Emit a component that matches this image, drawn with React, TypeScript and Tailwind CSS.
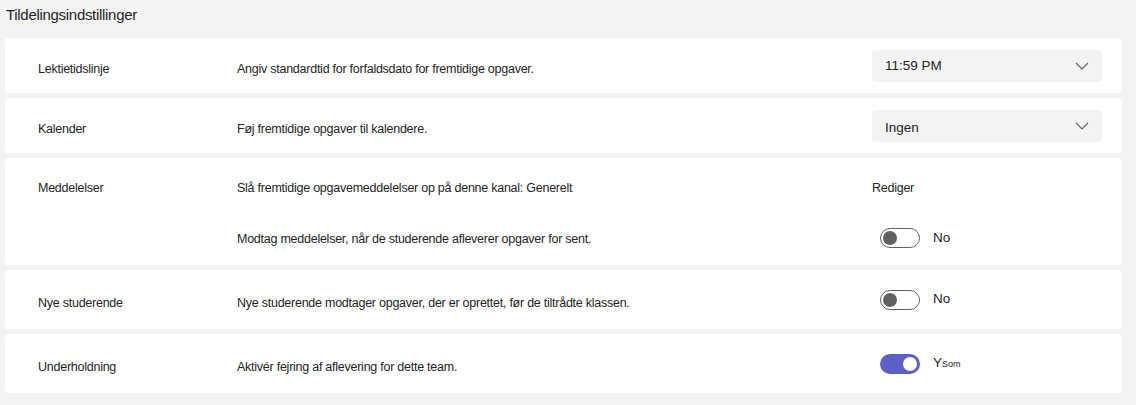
import { ReactNode } from "react";

type RowProps = {
  height: string;
  children: ReactNode;
};

// Chevron used inside the select boxes
function Chevron() {
  return (
    <svg width="14" height="8" viewBox="0 0 14 8" fill="none">
      <path d="M1 1l6 6 6-6" stroke="#616161" strokeWidth="1.1" />
    </svg>
  );
}

function Select({ value, offset }: { value: string; offset?: string }) {
  return (
    <div className="flex h-[32px] w-[230px] items-center justify-between rounded-[4px] bg-[#f3f3f3] pl-[13px] pr-[13px]">
      <span className={`text-[13.5px] text-[#242424] ${offset ?? ""}`}>{value}</span>
      <Chevron />
    </div>
  );
}

function Toggle({ on, text }: { on: boolean; text: ReactNode }) {
  return (
    <div className="flex items-center gap-[13px] pl-[8px]">
      {on ? (
        <div className="flex h-[20px] w-[40px] items-center justify-end rounded-full bg-[#5b5fc7] pr-[3px]">
          <div className="h-[14px] w-[14px] rounded-full bg-white" />
        </div>
      ) : (
        <div className="flex h-[20px] w-[40px] items-center rounded-full border border-[#616161] bg-white pl-[2px]">
          <div className="h-[14px] w-[14px] rounded-full bg-[#616161]" />
        </div>
      )}
      <span className="text-[13.5px] text-[#242424]">{text}</span>
    </div>
  );
}

function Desc({ children }: { children: ReactNode }) {
  return <div className="pt-[7px] text-[12.5px] tracking-[-0.25px] text-[#242424]">{children}</div>;
}

// One card with a single setting line
function Row({ height, children }: RowProps) {
  return (
    <div className={`flex ${height} items-center rounded-[4px] bg-white pl-[33px] pr-[20px]`}>
      {children}
    </div>
  );
}

function Label({ text }: { text: string }) {
  return <div className="w-[199px] shrink-0 pt-[7px] text-[12.5px] tracking-[-0.25px] text-[#242424]">{text}</div>;
}

export default function App() {
  return (
    <div
      className="h-[405px] w-[1136px] bg-[#f3f3f3] pl-[5px] pr-[14px]"
      style={{ fontFamily: '"Liberation Sans", Arial, sans-serif' }}
    >
      <h1 className="pl-[1px] pt-[5px] text-[15px] leading-[20px] tracking-[-0.3px] text-[#242424]">
        Tildelingsindstillinger
      </h1>

      <div className="mt-[13px] flex flex-col gap-[5px]">
        <Row height="h-[55px]">
          <Label text="Lektietidslinje" />
          <div className="flex-1">
            <Desc>Angiv standardtid for forfaldsdato for fremtidige opgaver.</Desc>
          </div>
          <Select value="11:59 PM" offset="pt-[1px]" />
        </Row>

        <Row height="h-[55px]">
          <Label text="Kalender" />
          <div className="flex-1">
            <Desc>Føj fremtidige opgaver til kalendere.</Desc>
          </div>
          <Select value="Ingen" offset="pt-[6px]" />
        </Row>

        {/* Notifications card has two lines */}
        <div className="flex h-[107px] rounded-[4px] bg-white pl-[33px] pr-[20px] pt-[21px]">
          <div className="w-[199px] shrink-0 text-[12.5px] tracking-[-0.25px] text-[#242424]">Meddelelser</div>
          <div className="flex flex-1 flex-col">
            <div className="flex h-[18px] items-center">
              <div className="flex-1 text-[12.5px] tracking-[-0.25px] text-[#242424]">
                Slå fremtidige opgavemeddelelser op på denne kanal: Generelt
              </div>
              <div className="w-[230px] text-[12.5px] tracking-[-0.25px] text-[#242424]">Rediger</div>
            </div>
            <div className="mt-[31px] flex h-[20px] items-center">
              <div className="flex-1 pt-[3px] text-[12.5px] tracking-[-0.25px] text-[#242424]">
                Modtag meddelelser, når de studerende afleverer opgaver for sent.
              </div>
              <div className="w-[230px]">
                <Toggle on={false} text="No" />
              </div>
            </div>
          </div>
        </div>

        <Row height="h-[59px]">
          <Label text="Nye studerende" />
          <div className="flex-1">
            <Desc>Nye studerende modtager opgaver, der er oprettet, før de tiltrådte klassen.</Desc>
          </div>
          <div className="w-[230px]">
            <Toggle on={false} text="No" />
          </div>
        </Row>

        <Row height="h-[59px]">
          <Label text="Underholdning" />
          <div className="flex-1">
            <Desc>Aktivér fejring af aflevering for dette team.</Desc>
          </div>
          <div className="w-[230px]">
            <Toggle
              on
              text={
                <span>
                  Y<span className="text-[9px]">Som</span>
                </span>
              }
            />
          </div>
        </Row>
      </div>
    </div>
  );
}
